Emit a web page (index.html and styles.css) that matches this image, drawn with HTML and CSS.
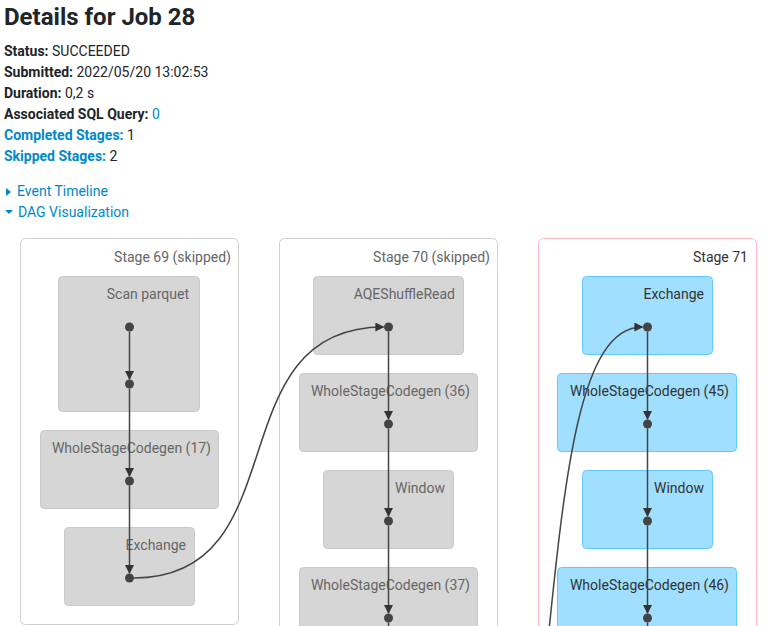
FILE: index.html
```html
<!DOCTYPE html>
<html lang="en">
<head>
<meta charset="UTF-8">
<title>Details for Job 28</title>
<link rel="stylesheet" href="styles.css">
</head>
<body>
    <div class="job-header">
        <h3>Details for Job 28</h3>
        <ul class="summary">
            <li><strong>Status:</strong> SUCCEEDED</li>
            <li><strong>Submitted:</strong> 2022/05/20 13:02:53</li>
            <li><strong>Duration:</strong> 0,2 s</li>
            <li><strong>Associated SQL Query:</strong> <a href="#">0</a></li>
            <li><a href="#"><strong>Completed Stages:</strong></a> 1</li>
            <li><a href="#"><strong>Skipped Stages:</strong></a> 2</li>
        </ul>
        <div class="toggle toggle-first"><span class="arrow-closed"></span><a href="#">Event Timeline</a></div>
        <div class="toggle"><span class="arrow-open"></span><a href="#">DAG Visualization</a></div>
    </div>

    <div id="dag-viz-graph">
        <svg class="job" width="773" height="396" viewBox="0 230 773 396">
            <defs>
                <marker id="arrowhead" viewBox="0 0 10 10" refX="9" refY="5" markerUnits="strokeWidth" markerWidth="8" markerHeight="6" orient="auto">
                    <path d="M 0 0 L 10 5 L 0 10 z"></path>
                </marker>
            </defs>

            <!-- Stage 69 -->
            <g class="cluster skipped">
                <rect class="stage-box" x="20.5" y="238.5" width="218" height="386" rx="5"></rect>
                <text class="stage-label" x="231" y="262">Stage 69 (skipped)</text>
                <g class="node">
                    <rect x="58.5" y="276.5" width="141" height="135" rx="4"></rect>
                    <text x="189" y="299">Scan parquet</text>
                </g>
                <g class="node">
                    <rect x="40.5" y="430.5" width="178" height="78" rx="4"></rect>
                    <text x="211" y="453">WholeStageCodegen (17)</text>
                </g>
                <g class="node">
                    <rect x="64.5" y="527.5" width="130" height="78" rx="4"></rect>
                    <text x="186" y="550">Exchange</text>
                </g>
            </g>

            <!-- Stage 70 -->
            <g class="cluster skipped">
                <rect class="stage-box" x="279.5" y="238.5" width="218" height="440" rx="5"></rect>
                <text class="stage-label" x="490" y="262">Stage 70 (skipped)</text>
                <g class="node">
                    <rect x="313.5" y="276.5" width="150" height="78" rx="4"></rect>
                    <text x="455" y="299">AQEShuffleRead</text>
                </g>
                <g class="node">
                    <rect x="299.5" y="373.5" width="178" height="78" rx="4"></rect>
                    <text x="470" y="396">WholeStageCodegen (36)</text>
                </g>
                <g class="node">
                    <rect x="323.5" y="470.5" width="130" height="78" rx="4"></rect>
                    <text x="445" y="493">Window</text>
                </g>
                <g class="node">
                    <rect x="299.5" y="567.5" width="178" height="78" rx="4"></rect>
                    <text x="470" y="590">WholeStageCodegen (37)</text>
                </g>
            </g>

            <!-- Stage 71 -->
            <g class="cluster">
                <rect class="stage-box" x="538.5" y="238.5" width="218" height="440" rx="5"></rect>
                <text class="stage-label" x="748" y="262">Stage 71</text>
                <g class="node">
                    <rect x="582.5" y="276.5" width="130" height="78" rx="4"></rect>
                    <text x="704" y="299">Exchange</text>
                </g>
                <g class="node">
                    <rect x="557.5" y="373.5" width="179" height="78" rx="4"></rect>
                    <text x="729" y="396">WholeStageCodegen (45)</text>
                </g>
                <g class="node">
                    <rect x="582.5" y="470.5" width="130" height="78" rx="4"></rect>
                    <text x="704" y="493">Window</text>
                </g>
                <g class="node">
                    <rect x="557.5" y="567.5" width="179" height="78" rx="4"></rect>
                    <text x="729" y="590">WholeStageCodegen (46)</text>
                </g>
            </g>

            <!-- edges -->
            <g class="edges">
                <path d="M129.5,331.5 L129.5,379" marker-end="url(#arrowhead)"></path>
                <path d="M129.5,388.5 L129.5,476" marker-end="url(#arrowhead)"></path>
                <path d="M129.5,485.5 L129.5,573" marker-end="url(#arrowhead)"></path>
                <path d="M134,578 C300,578 215,327 383.5,327" marker-end="url(#arrowhead)"></path>

                <path d="M388.5,331.5 L388.5,419" marker-end="url(#arrowhead)"></path>
                <path d="M388.5,428.5 L388.5,516" marker-end="url(#arrowhead)"></path>
                <path d="M388.5,525.5 L388.5,613" marker-end="url(#arrowhead)"></path>
                <path d="M388.5,622.5 L388.5,680"></path>

                <path d="M647.5,331.5 L647.5,419" marker-end="url(#arrowhead)"></path>
                <path d="M647.5,428.5 L647.5,516" marker-end="url(#arrowhead)"></path>
                <path d="M647.5,525.5 L647.5,613" marker-end="url(#arrowhead)"></path>
                <path d="M647.5,622.5 L647.5,680"></path>
                <path d="M546,660 C565,470 580,327 642.5,327" marker-end="url(#arrowhead)"></path>
            </g>

            <!-- dots -->
            <g class="dots">
                <circle cx="129.5" cy="327" r="4.5"></circle>
                <circle cx="129.5" cy="384" r="4.5"></circle>
                <circle cx="129.5" cy="481" r="4.5"></circle>
                <circle cx="129.5" cy="578" r="4.5"></circle>
                <circle cx="388.5" cy="327" r="4.5"></circle>
                <circle cx="388.5" cy="424" r="4.5"></circle>
                <circle cx="388.5" cy="521" r="4.5"></circle>
                <circle cx="388.5" cy="618" r="4.5"></circle>
                <circle cx="647.5" cy="327" r="4.5"></circle>
                <circle cx="647.5" cy="424" r="4.5"></circle>
                <circle cx="647.5" cy="521" r="4.5"></circle>
                <circle cx="647.5" cy="618" r="4.5"></circle>
            </g>
        </svg>
    </div>
</body>
</html>
```

FILE: styles.css
```css
html, body {
    margin: 0;
    padding: 0;
}
body {
    font-family: Roboto, "Noto Sans", sans-serif;
    font-size: 14px;
    line-height: 21px;
    color: #212529;
    background-color: #fff;
}
a {
    color: #0088cc;
    text-decoration: none;
}
.job-header {
    padding: 3px 4px 0 4px;
    height: 227px;
}
h3 {
    font-size: 24px;
    font-weight: 700;
    line-height: 29px;
    margin: 0 0 9px 0;
}
.summary {
    list-style: none;
    margin: 0;
    padding: 0;
}
.summary strong {
    font-weight: 700;
}
.toggle-first {
    margin-top: 14px;
}
.toggle a {
    margin-left: 6px;
}
.arrow-closed {
    display: inline-block;
    width: 0;
    height: 0;
    margin-left: 2px;
    border-top: 4px solid transparent;
    border-bottom: 4px solid transparent;
    border-left: 5px solid #0088cc;
}
.arrow-open {
    display: inline-block;
    width: 0;
    height: 0;
    margin-left: 1px;
    margin-right: -1px;
    margin-bottom: 3px;
    border-left: 4px solid transparent;
    border-right: 4px solid transparent;
    border-top: 4px solid #0088cc;
}
#dag-viz-graph {
    height: 396px;
    overflow: hidden;
}
#dag-viz-graph svg {
    display: block;
}
#dag-viz-graph text {
    font-family: Roboto, "Noto Sans", sans-serif;
    font-size: 14px;
    text-anchor: end;
    fill: #333;
}
#dag-viz-graph .skipped text {
    fill: #666;
}
.cluster .stage-box {
    fill: #fff;
    stroke: #ffb8c6;
    stroke-width: 1px;
}
.cluster.skipped .stage-box {
    stroke: #cfcfcf;
}
.node rect {
    fill: #a0dfff;
    stroke: #5fcaff;
    stroke-width: 1px;
}
.skipped .node rect {
    fill: #d6d6d6;
    stroke: #c9c9c9;
}
.edges path {
    fill: none;
    stroke: #444;
    stroke-width: 1.5px;
}
marker path {
    fill: #333;
    stroke: none;
}
.dots circle {
    fill: #444;
}
```
